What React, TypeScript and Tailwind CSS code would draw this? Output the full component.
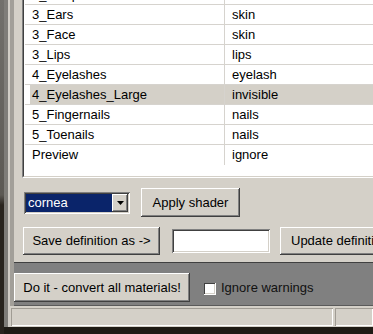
const rows: [string, string][] = [
  ['3_Scalp', 'hair'],
  ['3_Ears', 'skin'],
  ['3_Face', 'skin'],
  ['3_Lips', 'lips'],
  ['4_Eyelashes', 'eyelash'],
  ['4_Eyelashes_Large', 'invisible'],
  ['5_Fingernails', 'nails'],
  ['5_Toenails', 'nails'],
  ['Preview', 'ignore'],
];

const raised =
  'shadow-[inset_-1px_-1px_0_#404040,inset_1px_1px_0_#ffffff,inset_-2px_-2px_0_#808080,inset_2px_2px_0_#d4d0c8] bg-[#d4d0c8]';
const sunken =
  'shadow-[inset_1px_1px_0_#808080,inset_-1px_-1px_0_#ffffff,inset_2px_2px_0_#404040,inset_-2px_-2px_0_#d4d0c8]';

function Button({ label, className }: { label: string; className: string }) {
  return (
    <div className={`${raised} ${className} shrink-0 flex items-center text-[13px] text-black whitespace-nowrap overflow-hidden`}>
      {label}
    </div>
  );
}

export default function App() {
  return (
    <div className="flex w-[373px] h-[334px] overflow-hidden bg-[#1f1b15] font-['Liberation_Sans',Arial,sans-serif] text-[13px] text-black">
      <div className="w-[4px] h-full bg-[linear-gradient(#72706c_0,#5c5954_195px,#29241e_205px)]" />
      <div className="flex-1 flex flex-col min-w-0">
        <div className="h-[327px] flex">
          <div className="w-[4px] bg-[#7f7d79]" />
          <div className="w-[2px] bg-[#d2cec7]" />
          <div className="flex-1 flex flex-col min-w-0">
            <div className="h-[306px] flex">
              <div className="w-[4px] bg-[#a29f99]" />
              <div className="flex-1 flex flex-col min-w-0 overflow-hidden">
                {/* upper panel */}
                <div className="h-[262px] bg-[#d4d0c8] pl-[8px] flex flex-col">
                  <div className="h-[178px] border-l border-b border-l-[#808080] border-b-white">
                    <div className="h-full border-l border-b border-l-[#404040] border-b-[#d4d0c8] bg-white overflow-hidden">
                      <div className="mt-[-15px]">
                        {rows.map(([name, mat], i) => (
                          <div
                            key={name}
                            className={`h-5 flex pl-[5px] ml-[1px] ${i < rows.length - 1 ? 'border-b border-[#d6d3ce]' : ''}`}
                          >
                            <div className={`flex flex-1 ${name === '4_Eyelashes_Large' ? 'bg-[#d4d0c8]' : ''}`}>
                              <div className="w-[194px] pl-[2px] leading-[20px] whitespace-nowrap">{name}</div>
                              <div className="flex-1 border-l border-[#d6d3ce] pl-[7px] leading-[20px] whitespace-nowrap">{mat}</div>
                            </div>
                          </div>
                        ))}
                      </div>
                    </div>
                  </div>

                  <div className="mt-[10px] flex items-center h-[29px] pl-[2px]">
                    <div className={`${sunken} shrink-0 w-[106px] h-[22px] bg-white flex items-center p-[2px]`}>
                      <div className="flex-1 h-full bg-[#0a246a] text-white leading-[18px] pl-[2px]">cornea</div>
                      <div className={`${raised} w-[16px] h-full flex items-center justify-center`}>
                        <svg width="7" height="4" viewBox="0 0 7 4">
                          <path d="M0 0h7L3.5 4z" fill="#000" />
                        </svg>
                      </div>
                    </div>
                    <Button label="Apply shader" className="ml-[11px] w-[99px] h-[29px] justify-center" />
                  </div>

                  <div className="mt-[10px] flex items-center h-[28px] pl-[1px]">
                    <Button label="Save definition as ->" className="w-[137px] h-[28px] justify-center" />
                    <div className={`${sunken} shrink-0 ml-[12px] w-[98px] h-[24px] bg-white`} />
                    <Button label="Update definition" className="ml-[10px] w-[124px] h-[28px] justify-start pl-[11px]" />
                  </div>
                </div>

                {/* bottom panel */}
                <div className="flex-1 bg-[#808080] border-t border-[#404040] border-b border-b-[#5a5a5a] flex items-start pt-[10px]">
                  <Button label="Do it - convert all materials!" className="w-[176px] h-[29px] justify-center" />
                  <div className={`${sunken} shrink-0 ml-[13px] mt-[9px] w-[13px] h-[13px] bg-white`} />
                  <div className="ml-[5px] mt-[6px] text-[#111] leading-[18px] whitespace-nowrap">Ignore warnings</div>
                </div>
              </div>
            </div>
            {/* status bar */}
            <div className="h-[21px] bg-[#d4d0c8] flex pt-[2px] pb-[1px] pl-[1px] gap-[2px]">
              <div className="w-[322px] shadow-[inset_1px_1px_0_#a09c94,inset_-1px_-1px_0_#ffffff]" />
              <div className="flex-1 shadow-[inset_1px_1px_0_#a09c94,inset_-1px_-1px_0_#ffffff]" />
            </div>
          </div>
        </div>
      </div>
    </div>
  );
}
